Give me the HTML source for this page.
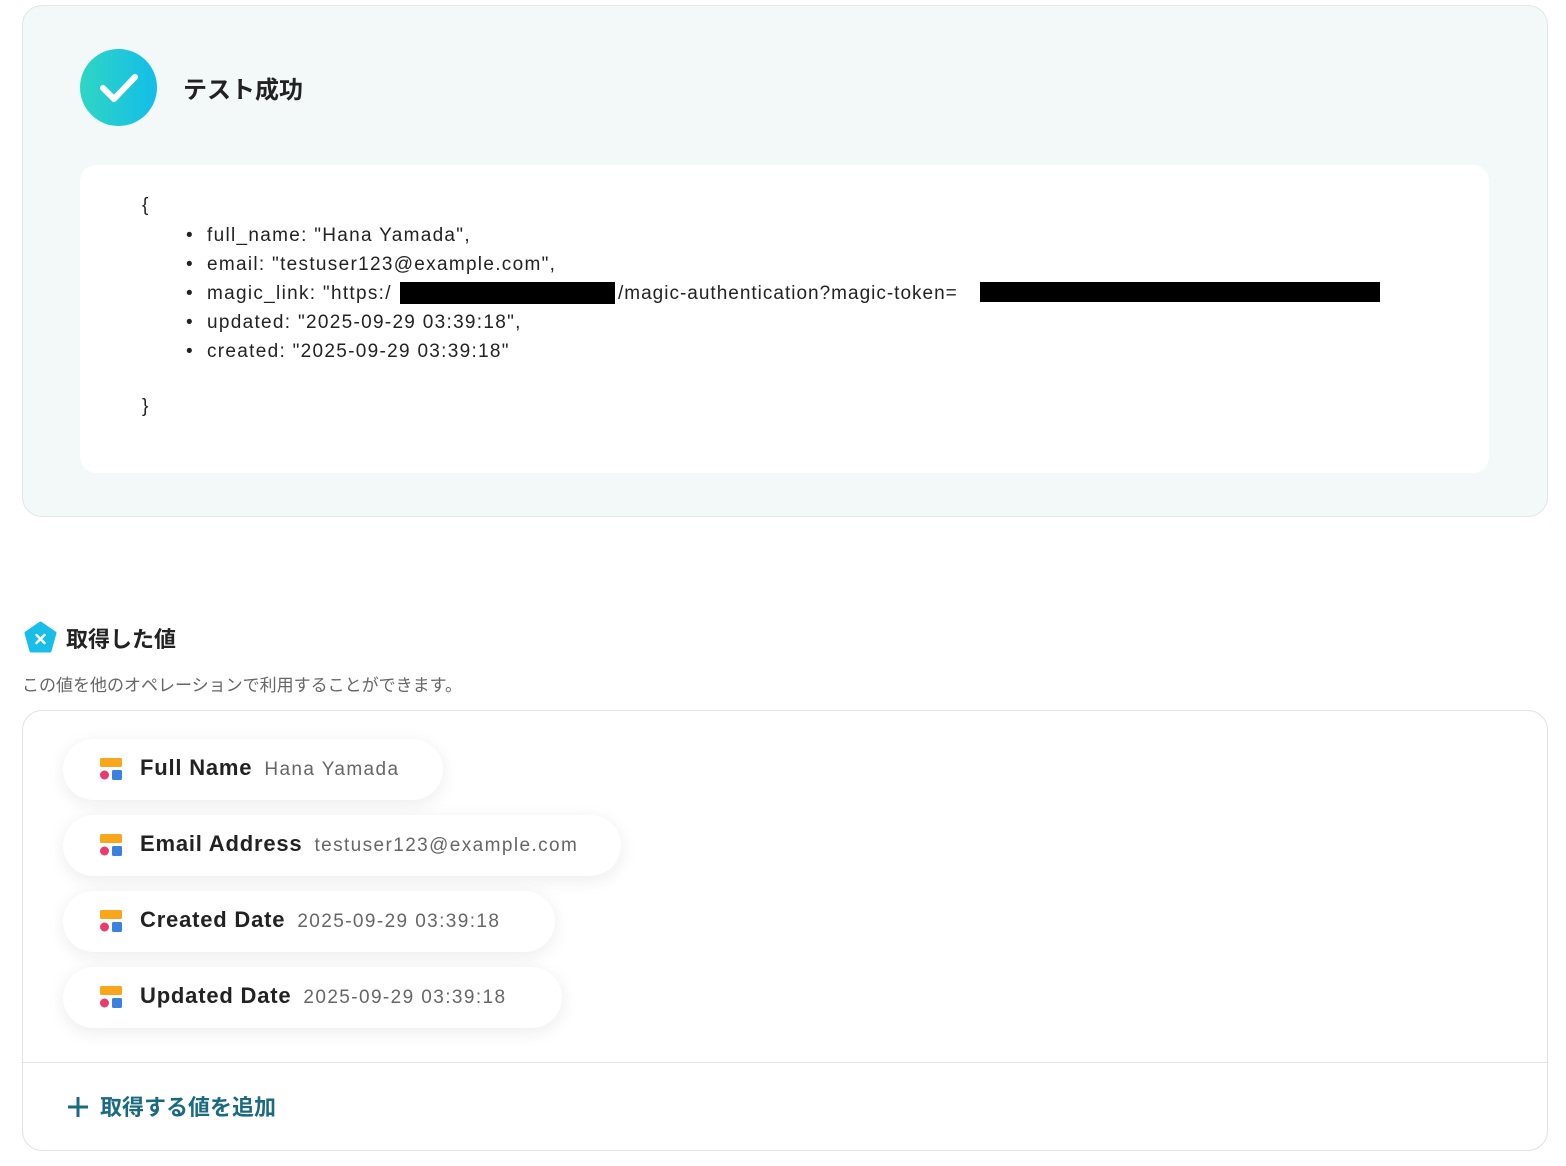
<!DOCTYPE html>
<html><head><meta charset="utf-8"><style>
*{box-sizing:border-box;margin:0;padding:0}
body{width:1566px;height:1166px;background:#fff;font-family:"Liberation Sans","Noto Sans CJK JP",sans-serif;color:#222;position:relative;overflow:hidden}
.panel{position:absolute;left:22px;top:5px;width:1526px;height:512px;background:#f3f8f8;border:1px solid #e2e6e6;border-radius:20px}
.check{position:absolute;left:80px;top:49px;width:77px;height:77px;border-radius:50%;background:linear-gradient(90deg,#2fd6c4,#13bde8)}
.title{position:absolute;left:183px;top:70px;font-size:24px;font-weight:bold;color:#222}
.code{position:absolute;left:80px;top:167px;width:1409px;height:306px;font-size:19px;letter-spacing:1.3px}
.codebg{position:absolute;left:80px;top:165px;width:1409px;height:308px;background:#fff;border-radius:16px}
.code div{position:absolute;white-space:nowrap}
.red{position:absolute;background:#000}
.h2{position:absolute;left:66px;top:622px;font-size:22px;font-weight:bold}
.sub{position:absolute;left:22px;top:671px;font-size:17px;color:#666}
.box{position:absolute;left:22px;top:710px;width:1526px;height:441px;border:1px solid #e2e2e2;border-radius:20px;overflow:hidden}
.div{position:absolute;left:0;top:351px;width:100%;height:1px;background:#e2e2e2}
.pill{position:absolute;left:40px;height:61px;background:#fff;border-radius:31px;box-shadow:0 4px 18px rgba(0,0,0,0.08);white-space:nowrap}
.pill .ic{position:absolute;left:37px;top:19px;width:22px;height:22px}
.pill .l{position:absolute;left:77px;top:16px;font-size:22px;font-weight:bold;color:#222;letter-spacing:0.8px}
.pill .v{font-weight:normal;font-size:19px;color:#666;margin-left:12px;letter-spacing:1.4px}
.add{position:absolute;left:66px;top:1090px;font-size:22px;font-weight:bold;color:#1a6b80}
</style></head><body>
<div class="panel"></div>
<div class="check"><svg width="77" height="77" viewBox="0 0 77 77"><path d="M23 39 L34 50 L55 28" fill="none" stroke="#fff" stroke-width="6" stroke-linecap="round" stroke-linejoin="round"/></svg></div>
<div class="title">テスト成功</div>
<div class="codebg"></div>
<div class="code">
<div style="left:62px;top:28px">{</div>
<div style="left:106px;top:58px">•</div><div style="left:127px;top:58px">full_name: "Hana Yamada",</div>
<div style="left:106px;top:87px">•</div><div style="left:127px;top:87px">email: "testuser123@example.com",</div>
<div style="left:106px;top:116px">•</div><div style="left:127px;top:116px">magic_link: "https:/</div>
<div style="left:538px;top:116px;letter-spacing:1px">/magic-authentication?magic-token=</div>
<div style="left:106px;top:145px">•</div><div style="left:127px;top:145px">updated: "2025-09-29 03:39:18",</div>
<div style="left:106px;top:174px">•</div><div style="left:127px;top:174px">created: "2025-09-29 03:39:18"</div>
<div style="left:62px;top:229px">}</div>
</div>
<div class="red" style="left:400px;top:282px;width:215px;height:22px"></div>
<div class="red" style="left:980px;top:282px;width:400px;height:20px"></div>

<svg style="position:absolute;left:24px;top:621px" width="33" height="33" viewBox="0 0 33 33"><path d="M16.5 2 L31 12 L26 30 L7 30 L2 12 Z" fill="#18bde8" stroke="#18bde8" stroke-width="3" stroke-linejoin="round"/><path d="M12.5 14 L20.5 22 M20.5 14 L12.5 22" stroke="#fff" stroke-width="2.4" stroke-linecap="round"/></svg>
<div class="h2">取得した値</div>
<div class="sub">この値を他のオペレーションで利用することができます。</div>
<div class="box">
<div class="pill" style="top:28px;width:380px"><svg class="ic" viewBox="0 0 22 22"><rect x="0" y="0" width="22" height="9" rx="1.5" fill="#f9a61a"/><circle cx="4.5" cy="17" r="4.5" fill="#ee3a6a"/><rect x="12" y="12" width="10" height="10" rx="1.5" fill="#3b82e0"/></svg><div class="l">Full Name<span class="v">Hana Yamada</span></div></div>
<div class="pill" style="top:104px;width:558px"><svg class="ic" viewBox="0 0 22 22"><rect x="0" y="0" width="22" height="9" rx="1.5" fill="#f9a61a"/><circle cx="4.5" cy="17" r="4.5" fill="#ee3a6a"/><rect x="12" y="12" width="10" height="10" rx="1.5" fill="#3b82e0"/></svg><div class="l">Email Address<span class="v">testuser123@example.com</span></div></div>
<div class="pill" style="top:180px;width:492px"><svg class="ic" viewBox="0 0 22 22"><rect x="0" y="0" width="22" height="9" rx="1.5" fill="#f9a61a"/><circle cx="4.5" cy="17" r="4.5" fill="#ee3a6a"/><rect x="12" y="12" width="10" height="10" rx="1.5" fill="#3b82e0"/></svg><div class="l">Created Date<span class="v">2025-09-29 03:39:18</span></div></div>
<div class="pill" style="top:256px;width:499px"><svg class="ic" viewBox="0 0 22 22"><rect x="0" y="0" width="22" height="9" rx="1.5" fill="#f9a61a"/><circle cx="4.5" cy="17" r="4.5" fill="#ee3a6a"/><rect x="12" y="12" width="10" height="10" rx="1.5" fill="#3b82e0"/></svg><div class="l">Updated Date<span class="v">2025-09-29 03:39:18</span></div></div>
<div class="div"></div>
</div>
<svg style="position:absolute;left:67px;top:1096px" width="22" height="22" viewBox="0 0 22 22"><path d="M11 1 V21 M1 11 H21" stroke="#1a6b80" stroke-width="3"/></svg>
<div class="add" style="left:100px">取得する値を追加</div>
</body></html>
